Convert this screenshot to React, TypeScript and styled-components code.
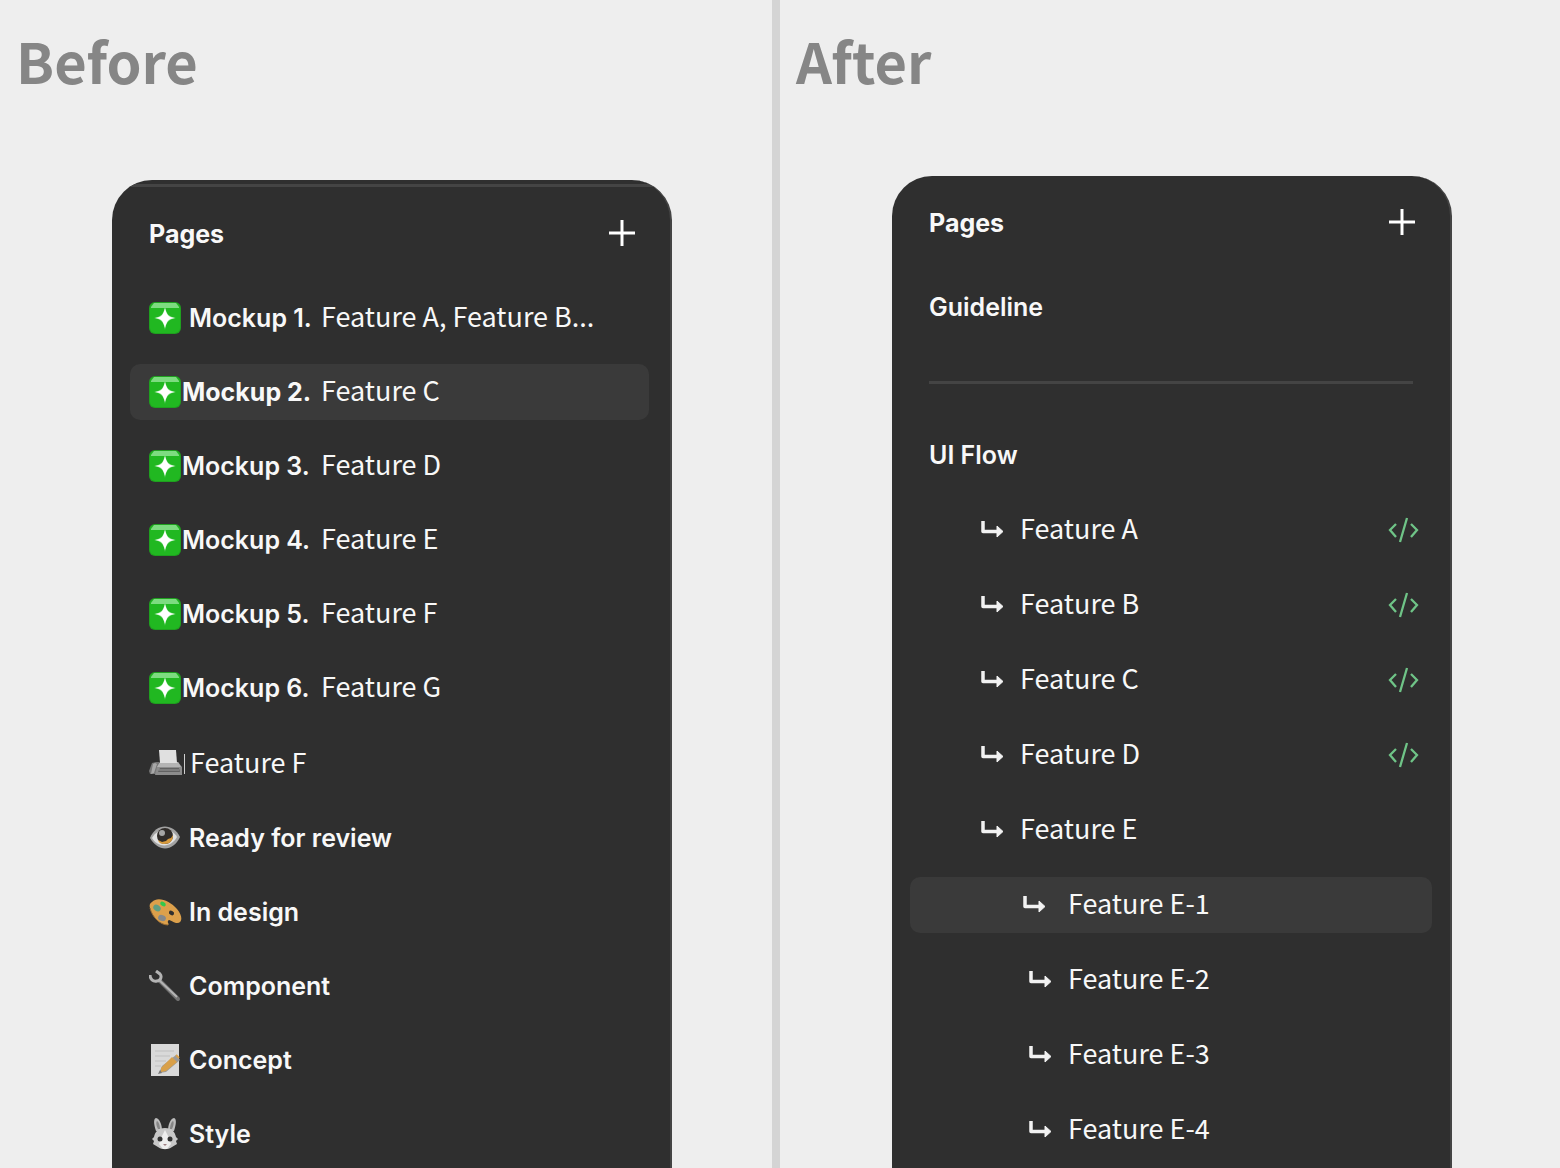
import React from "react";
import styled, { createGlobalStyle } from "styled-components";

const Global = createGlobalStyle`
  *, *::before, *::after { box-sizing: border-box; }
  body { margin: 0; background: #eeeeee; }
  ul, h1, h2 { margin: 0; padding: 0; font: inherit; }
  ul { list-style: none; }
`;

const UI = `"Inter", "Liberation Sans", sans-serif`;
const SANS = `"Noto Sans CJK KR", "Noto Sans CJK SC", "Noto Sans", sans-serif`;

const Board = styled.main`
  display: grid;
  grid-template-columns: 1fr 1fr;
  height: 100vh;
  overflow: hidden;
`;

const Side = styled.section<{ $divided?: boolean }>`
  display: flex;
  flex-direction: column;
  min-width: 0;
  min-height: 0;
  background: #eeeeee;
  box-shadow: ${(p) => (p.$divided ? "inset -8px 0 #d4d4d4" : "none")};
`;

const Title = styled.h1`
  flex: none;
  padding: 30px 16px 0;
  font: 700 56px/60px ${SANS};
  color: #868686;
`;

const Panel = styled.div<{ $top: number; $edge?: boolean }>`
  flex: 1;
  margin: ${(p) => p.$top}px 108px 0 112px;
  border-radius: 40px 40px 0 0;
  border-right: 2px solid #444444;
  background: #2f2f2f;
  overflow: hidden;
  padding-top: 4px;
  &::before {
    content: "";
    display: block;
    height: 3px;
    background: ${(p) => (p.$edge ? "#444444" : "transparent")};
  }
`;

const PanelHead = styled.header<{ $height: number }>`
  display: flex;
  align-items: center;
  justify-content: space-between;
  height: ${(p) => p.$height}px;
  padding: 0 34px 0 37px;
`;

const Label = styled.span<{ $weight?: number }>`
  font: ${(p) => p.$weight ?? 600} 25px/32px ${UI};
  color: #f8f8f8;
  white-space: nowrap;
`;

const Name = styled.span`
  padding-bottom: 4px;
  font: 400 27px/40px ${SANS};
  color: #f8f8f8;
  white-space: nowrap;
`;

const AddButton = styled.button`
  display: flex;
  padding: 0;
  border: 0;
  background: none;
  color: #ffffff;
`;

const PageList = styled.ul<{ $inset: number }>`
  padding: 0 ${(p) => p.$inset}px 0 18px;
  & + & { margin-top: 2px; }
`;

const PageItem = styled.li<{ $height: number }>`
  display: flex;
  align-items: center;
  height: ${(p) => p.$height}px;
`;

const PageButton = styled.button<{ $active?: boolean; $indent?: number }>`
  display: flex;
  align-items: center;
  width: 100%;
  height: 56px;
  padding: 0 12px 0 ${(p) => p.$indent ?? 19}px;
  border: 0;
  border-radius: 10px;
  background: ${(p) => (p.$active ? "#3a3a3a" : "transparent")};
  text-align: left;
`;

const MockupLead = styled.span`
  display: flex;
  align-items: center;
  flex: none;
  width: 172px;
`;

const IconSlot = styled.span<{ $width: number }>`
  display: flex;
  flex: none;
  width: ${(p) => p.$width}px;
`;

const Caret = styled.i`
  flex: none;
  width: 1px;
  height: 20px;
  margin: 0 5px 0 -5px;
  background: #cfcfcf;
`;

const CodeSlot = styled.span`
  display: flex;
  margin-left: auto;
`;

const Rule = styled.hr`
  height: 3px;
  margin: 30px 37px 34px;
  border: 0;
  background: #444444;
`;

const Plus = () => (
  <svg width="28" height="28" viewBox="0 0 28 28" aria-hidden="true">
    <path d="M14 0v26M1 13h26" stroke="currentColor" strokeWidth="3" fill="none" />
  </svg>
);

const Sparkle = () => (
  <svg width="32" height="32" viewBox="0 0 32 32" aria-hidden="true">
    <rect width="32" height="32" rx="6" fill="#1fa01f" />
    <rect x="1" y="1" width="30" height="30" rx="5" fill="#21b821" />
    <path d="M5 1h22l3 4v1H2V5z" fill="#7ddc80" />
    <path d="M16 4c1 8 4 11 11 12c-7 1-10 4-11 12c-1-8-4-11-11-12c7-1 10-4 11-12z" fill="#7ddc80" />
    <path d="M16 6c2 7 3 9 10 10c-7 1-8 3-10 10c-2-7-3-9-10-10c7-1 8-3 10-10z" fill="#ffffff" />
  </svg>
);

const Fax = () => (
  <svg width="34" height="32" viewBox="0 0 34 32" aria-hidden="true">
    <path d="M3 15l4-1h3v12H1L0 23z" fill="#777777" />
    <path d="M4 16l2-1 2 1-3 9-3 1z" fill="#a8a8a8" />
    <path d="M8 19l3-5h18l4 5v8H6z" fill="#8c8c8c" />
    <path d="M11 14h18l3 5H8z" fill="#b4b4b4" />
    <path d="M10 2h17l1 13H11z" fill="#e0e0e0" />
    <path d="M11 20h19l1 4H9z" fill="#626262" />
    <path d="M10 22h20" stroke="#9a9a9a" />
  </svg>
);

const Eye = () => (
  <svg width="32" height="32" viewBox="0 0 32 32" aria-hidden="true">
    <path d="M1 16C7 1 24 1 31 15C24 30 9 30 1 16z" fill="#a2a2a2" />
    <path d="M3 16C8 6 23 5 28 15C22 26 9 26 3 16z" fill="#e2e2e2" />
    <circle cx="16" cy="14" r="8" fill="#302c29" />
    <path d="M9 18c1 3 3 4 6 4c6 0 9-3 9-9l-2 3-3 1-2 2-4 1z" fill="#d89b3e" />
    <circle cx="13" cy="11" r="3" fill="#a5a5a5" />
  </svg>
);

const Palette = () => (
  <svg width="34" height="32" viewBox="0 0 34 32" aria-hidden="true">
    <path fillRule="evenodd" d="M3 6C9 0 21 5 28 13C34 20 34 28 27 27C23 26 20 22 19 25C18 27 21 28 19 29C11 29 3 21 1 12C0 9 1 7 3 6zM20 16a2.500 2 30 1 0 5 2a2.500 2 30 1 0-5-2z" fill="#dca04b" />
    <path d="M1 12C3 21 11 29 19 29" stroke="#946a34" fill="none" />
    <ellipse cx="8" cy="12" rx="4" ry="3" transform="rotate(35 8 12)" fill="#609e82" />
    <ellipse cx="14" cy="8" rx="3" ry="2" transform="rotate(30 14 8)" fill="#31c94b" />
    <ellipse cx="13" cy="22" rx="4" ry="3" transform="rotate(20 13 22)" fill="#85888a" />
  </svg>
);

const Wrench = () => (
  <svg width="32" height="32" viewBox="0 0 32 32" aria-hidden="true">
    <path d="M11 11l18 18" stroke="#717171" strokeWidth="4" strokeLinecap="round" />
    <path d="M11 11l17 16" stroke="#b4b4b4" strokeWidth="2" />
    <path d="M1 5c0 4 3 7 7 6c4 0 5-5 3-7L7 1" stroke="#b4b4b4" strokeWidth="3" fill="none" />
  </svg>
);

const Memo = () => (
  <svg width="32" height="34" viewBox="0 0 32 34" aria-hidden="true">
    <path d="M2 1h28v32H2z" fill="#d9d9d9" />
    <path d="M6 8h19M6 13h15M6 18h11M6 23h6" stroke="#cccccc" strokeWidth="2" />
    <path d="M10 30l3-7L27 12l4 5-14 12z" fill="#9a9a9a" />
    <path d="M12 25l11-11 5 5-11 9-5 1z" fill="#d9a049" />
    <path d="M27 12l3 3" stroke="#d9a049" strokeWidth="2" />
    <path d="M9 31l4-1-2-3z" fill="#777777" />
  </svg>
);

const Rabbit = () => (
  <svg width="32" height="34" viewBox="0 0 32 34" aria-hidden="true">
    <path d="M7 14C5 8 4 2 7 1C11 2 13 8 13 14zM25 14C27 8 28 2 25 1C21 2 19 8 19 14z" fill="#bcbcbc" />
    <path d="M9 12C7 8 7 5 8 4C10 5 11 9 11 12zM23 12C25 8 25 5 24 4C22 5 21 9 21 12z" fill="#858585" />
    <path d="M16 11C9 11 6 15 5 20L3 22L5 24L4 27L9 30C13 33 19 33 23 30L28 27L27 24L29 22L27 20C26 15 23 11 16 11z" fill="#c8c8c8" />
    <path d="M16 13l4 8 2 6-4 5h-4l-4-5 2-6z" fill="#eeeeee" />
    <circle cx="11" cy="22" r="2.500" fill="#333333" />
    <circle cx="21" cy="22" r="2.500" fill="#333333" />
    <path d="M14 27h4l-2 2z" fill="#9d7f82" />
  </svg>
);

const Arrow = () => (
  <svg width="24" height="20" viewBox="0 0 24 20" aria-hidden="true">
    <path d="M3 1v10.500h15" stroke="#f2f2f2" strokeWidth="3.500" fill="none" strokeLinejoin="round" />
    <path d="M17 6l6 5.500-6 5.500z" fill="#f2f2f2" stroke="#f2f2f2" strokeLinejoin="round" />
  </svg>
);

const Code = () => (
  <svg width="32" height="26" viewBox="0 0 32 26" aria-hidden="true">
    <path d="M8 7L2 13l6 7M23 7l6 6-6 7M19 1l-7 24" stroke="#6fc487" strokeWidth="2.300" fill="none" />
  </svg>
);

const mockups = [
  "Feature A, Feature B...",
  "Feature C",
  "Feature D",
  "Feature E",
  "Feature F",
  "Feature G",
];

const stages = [
  { icon: <Eye />, name: "Ready for review" },
  { icon: <Palette />, name: "In design" },
  { icon: <Wrench />, name: "Component" },
  { icon: <Memo />, name: "Concept" },
  { icon: <Rabbit />, name: "Style" },
];

const flows = [
  { name: "Feature A", indent: 70, ready: true },
  { name: "Feature B", indent: 70, ready: true },
  { name: "Feature C", indent: 70, ready: true },
  { name: "Feature D", indent: 70, ready: true },
  { name: "Feature E", indent: 70 },
  { name: "Feature E-1", indent: 112, active: true },
  { name: "Feature E-2", indent: 118 },
  { name: "Feature E-3", indent: 118 },
  { name: "Feature E-4", indent: 118 },
];

function PagesHead({ height }: { height: number }) {
  return (
    <PanelHead $height={height}>
      <h2><Label $weight={700}>Pages</Label></h2>
      <AddButton type="button" aria-label="Add page"><Plus /></AddButton>
    </PanelHead>
  );
}

export default function App() {
  return (
    <>
      <Global />
      <Board>
        <Side $divided>
          <Title>Before</Title>
          <Panel $top={90} $edge>
            <PagesHead height={94} />
            <PageList $inset={21}>
              {mockups.map((name, i) => (
                <PageItem key={name} $height={74}>
                  <PageButton type="button" $active={i === 1}>
                    <MockupLead>
                      <IconSlot $width={i === 0 ? 40 : 33}><Sparkle /></IconSlot>
                      <Label $weight={i === 1 ? 700 : 600}>{`Mockup ${i + 1}.`}</Label>
                    </MockupLead>
                    <Name>{name}</Name>
                  </PageButton>
                </PageItem>
              ))}
            </PageList>
            <PageList $inset={21}>
              <PageItem $height={74}>
                <PageButton type="button">
                  <IconSlot $width={40}><Fax /></IconSlot>
                  <Caret />
                  <Name>Feature F</Name>
                </PageButton>
              </PageItem>
              {stages.map((s) => (
                <PageItem key={s.name} $height={74}>
                  <PageButton type="button">
                    <IconSlot $width={40}>{s.icon}</IconSlot>
                    <Label>{s.name}</Label>
                  </PageButton>
                </PageItem>
              ))}
            </PageList>
          </Panel>
        </Side>
        <Side>
          <Title>After</Title>
          <Panel $top={86}>
            <PagesHead height={80} />
            <PageList $inset={18}>
              <PageItem $height={88}>
                <PageButton type="button"><Label>Guideline</Label></PageButton>
              </PageItem>
            </PageList>
            <Rule />
            <PageList $inset={18}>
              <PageItem $height={74}>
                <PageButton type="button"><Label>UI Flow</Label></PageButton>
              </PageItem>
              {flows.map((f) => (
                <PageItem key={f.name} $height={75}>
                  <PageButton type="button" $active={f.active} $indent={f.indent}>
                    <IconSlot $width={f.active ? 46 : 40}><Arrow /></IconSlot>
                    <Name>{f.name}</Name>
                    {f.ready && <CodeSlot><Code /></CodeSlot>}
                  </PageButton>
                </PageItem>
              ))}
            </PageList>
          </Panel>
        </Side>
      </Board>
    </>
  );
}
